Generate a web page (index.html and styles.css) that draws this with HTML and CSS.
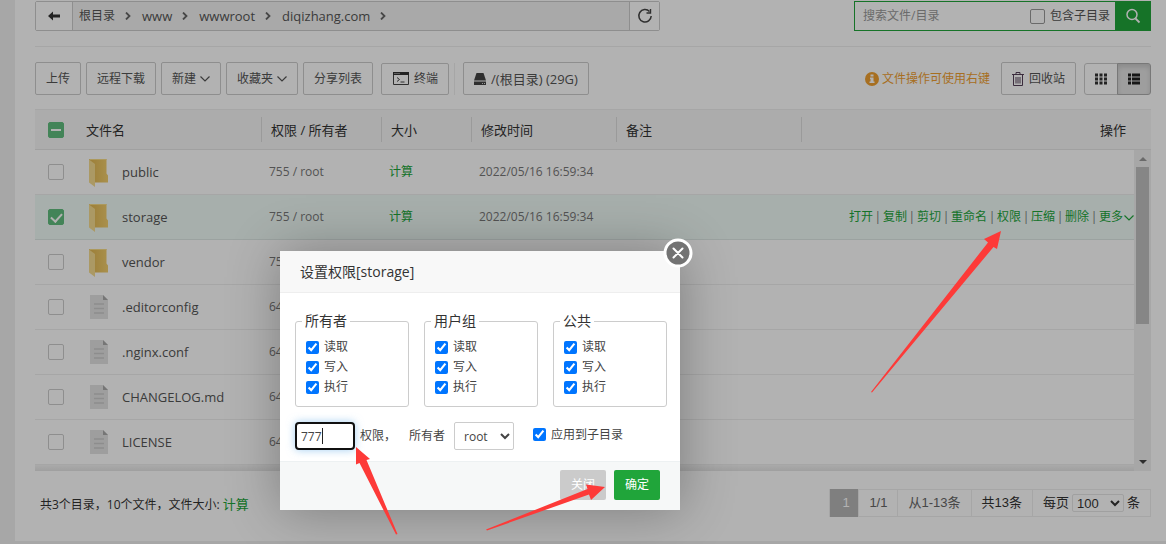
FILE: index.html
```html
<!DOCTYPE html>
<html lang="zh-CN">
<head>
<meta charset="utf-8">
<title>文件管理</title>
<link rel="stylesheet" href="styles.css">
</head>
<body>
<svg class="defs" aria-hidden="true">
  <symbol id="chev-down" viewBox="0 0 10 6"><path d="M.5.5 5 5 9.500.5" fill="none" stroke="currentColor" stroke-width="1.200"/></symbol>
  <symbol id="chev-right" viewBox="0 0 6 8"><path d="M1 .5 4.500 4 1 7.500" fill="none" stroke="currentColor" stroke-width="1.800"/></symbol>
  <linearGradient id="folder-back" x1="0" y1="0" x2="1" y2="0"><stop offset="0" stop-color="#dfb54f"/><stop offset=".5" stop-color="#e9c25f"/><stop offset="1" stop-color="#f3cf6f"/></linearGradient>
  <symbol id="folder" viewBox="0 0 20 29">
    <path d="M1 1h17.500v14.500l1.500 2V24.500H6z" fill="url(#folder-back)"/>
    <path d="M1 1h17.500v1H2z" fill="#f7dc86"/>
    <path d="M1 1.500 7 6v23L1 24.500z" fill="#f5dc90"/>
  </symbol>
  <symbol id="doc" viewBox="0 0 18 24">
    <path d="M0 0h13l5 5v19H0z" fill="#e3e3e3"/><path d="M13 0l5 5h-5z" fill="#a9a9a9"/>
    <path d="M4 9h10M4 13.500h10M4 18h10" stroke="#cacaca" stroke-width="1.600"/>
  </symbol>
</svg>

<main class="panel">
  <div class="top-row">
    <div class="path-bar">
      <button class="back" aria-label="返回"><svg width="14" height="10" viewBox="0 0 14 10"><path d="M1 5 6 .5v3h7v3H6v3z" fill="#333"/></svg></button>
      <nav class="crumbs">
        <a href="#">根目录</a><svg class="sep"><use href="#chev-right"/></svg>
        <a href="#">www</a><svg class="sep"><use href="#chev-right"/></svg>
        <a href="#">wwwroot</a><svg class="sep"><use href="#chev-right"/></svg>
        <a href="#">diqizhang.com</a><svg class="sep"><use href="#chev-right"/></svg>
      </nav>
      <button class="refresh" aria-label="刷新"><svg width="16" height="16" viewBox="0 0 16 16"><path d="M12.500 3.500A6.200 6.200 0 1 0 14.200 8" fill="none" stroke="#444" stroke-width="1.500"/><path d="M13.500 1v4H9.500" fill="none" stroke="#444" stroke-width="1.400"/></svg></button>
    </div>
    <div class="search">
      <input class="search-text" type="text" placeholder="搜索文件/目录" aria-label="搜索文件/目录">
      <label class="sub"><input class="box small" type="checkbox">包含子目录</label>
      <button class="search-btn" aria-label="搜索"><svg width="16" height="16" viewBox="0 0 16 16"><circle cx="7" cy="6.500" r="5" fill="none" stroke="#fff" stroke-width="1.500"/><path d="M10.500 10.500 14.500 14.500" stroke="#fff" stroke-width="1.800"/></svg></button>
    </div>
  </div>

  <div class="toolbar">
    <button class="btn">上传</button>
    <button class="btn">远程下载</button>
    <button class="btn">新建<svg class="down"><use href="#chev-down"/></svg></button>
    <button class="btn">收藏夹<svg class="down"><use href="#chev-down"/></svg></button>
    <button class="btn">分享列表</button>
    <div class="group"><button class="btn term"><svg width="16" height="13" viewBox="0 0 16 13"><path d="M.5.5h15v12H.5z" fill="none" stroke="#444"/><path d="M0 0h16v3H0z" fill="#333"/><path d="M1.500 1.500h1M3.500 1.500h1M5.500 1.500h1" stroke="#ddd"/><path d="M4 5.500 6.500 7.500 4 9.500M7.500 10h4" fill="none" stroke="#444"/></svg>终端</button></div>
    <button class="btn disk"><svg width="12" height="12" viewBox="0 0 12 12"><path d="M2.500 0h7L12 7.500H0z" fill="#444"/><path d="M0 8.500h12V12H0z" fill="#444"/><path d="M8 10.500h1M10 10.500h1" stroke="#ddd"/></svg>/(根目录) (29G)</button>
    <span class="tip"><svg width="14" height="14" viewBox="0 0 14 14"><circle cx="7" cy="7" r="7" fill="#f0a030"/><path d="M5.500 2.500h3v2h-3zM5 5.500h3.500V9.500H9.500v1.500h-5V9.500H5.500V7H5z" fill="#fff"/></svg>文件操作可使用右键</span>
    <button class="btn bin"><svg width="12" height="14" viewBox="0 0 12 14"><path d="M0 2.500h12M4 2V.5h4V2M1.500 3v10.500h9V3M4 5v6.500M6 5v6.500M8 5v6.500" fill="none" stroke="#554058"/></svg>回收站</button>
    <div class="views">
      <button aria-label="图标视图"><svg width="12" height="12" viewBox="0 0 12 12"><path d="M0 2h3M4.500 2h3M9 2h3M0 6h3M4.500 6h3M9 6h3M0 10h3M4.500 10h3M9 10h3" stroke="#333" stroke-width="3"/></svg></button>
      <button class="on" aria-label="列表视图"><svg width="12" height="12" viewBox="0 0 12 12"><path d="M0 2h3M4 2h8M0 6h3M4 6h8M0 10h3M4 10h8" stroke="#222" stroke-width="3"/></svg></button>
    </div>
  </div>

  <table class="grid head">
    <colgroup><col class="c-check"><col class="c-name"><col class="c-perm"><col class="c-size"><col class="c-date"><col class="c-note"><col></colgroup>
    <thead><tr>
      <th><input class="box mixed" type="checkbox" aria-label="全选"></th>
      <th>文件名</th><th class="line">权限 / 所有者</th><th class="line">大小</th><th class="line">修改时间</th><th class="line">备注</th><th class="line ops-head">操作</th>
    </tr></thead>
  </table>
  <div class="scroll">
    <div class="rows">
      <table class="grid list">
        <colgroup><col class="c-check"><col class="c-name"><col class="c-perm"><col class="c-size"><col class="c-date"><col></colgroup>
        <tbody>
          <tr><td><input class="box" type="checkbox" aria-label="public"></td><td><div class="file"><svg class="folder"><use href="#folder"/></svg>public</div></td><td>755 / root</td><td><a href="#">计算</a></td><td>2022/05/16 16:59:34</td><td></td></tr>
          <tr class="picked"><td><input class="box" type="checkbox" checked aria-label="storage"></td><td><div class="file"><svg class="folder"><use href="#folder"/></svg>storage</div></td><td>755 / root</td><td><a href="#">计算</a></td><td>2022/05/16 16:59:34</td>
            <td><div class="ops"><a href="#">打开</a><i>|</i><a href="#">复制</a><i>|</i><a href="#">剪切</a><i>|</i><a href="#">重命名</a><i>|</i><a href="#">权限</a><i>|</i><a href="#">压缩</a><i>|</i><a href="#">删除</a><i>|</i><a href="#">更多<svg class="down"><use href="#chev-down"/></svg></a></div></td></tr>
          <tr><td><input class="box" type="checkbox" aria-label="vendor"></td><td><div class="file"><svg class="folder"><use href="#folder"/></svg>vendor</div></td><td>755 / root</td><td></td><td></td><td></td></tr>
          <tr><td><input class="box" type="checkbox" aria-label=".editorconfig"></td><td><div class="file"><svg class="doc"><use href="#doc"/></svg>.editorconfig</div></td><td>644 / root</td><td></td><td></td><td></td></tr>
          <tr><td><input class="box" type="checkbox" aria-label=".nginx.conf"></td><td><div class="file"><svg class="doc"><use href="#doc"/></svg>.nginx.conf</div></td><td>644 / root</td><td></td><td></td><td></td></tr>
          <tr><td><input class="box" type="checkbox" aria-label="CHANGELOG.md"></td><td><div class="file"><svg class="doc"><use href="#doc"/></svg>CHANGELOG.md</div></td><td>644 / root</td><td></td><td></td><td></td></tr>
          <tr><td><input class="box" type="checkbox" aria-label="LICENSE"></td><td><div class="file"><svg class="doc"><use href="#doc"/></svg>LICENSE</div></td><td>644 / root</td><td></td><td></td><td></td></tr>
        </tbody>
      </table>
      <div class="fade"></div>
    </div>
    <div class="bar"><svg width="8" height="4" viewBox="0 0 8 4"><path d="M0 4 4 0l4 4z" fill="#999"/></svg><div class="thumb"></div><svg width="8" height="4" viewBox="0 0 8 4"><path d="M0 0h8L4 4z" fill="#444"/></svg></div>
  </div>

  <footer class="foot">
    <div class="count">共3个目录，10个文件，文件大小: <a href="#">计算</a></div>
    <div class="pager">
      <span class="cur">1</span><span class="muted">1/1</span><span class="muted">从1-13条</span><span>共13条</span>
      <label>每页<select><option>100</option></select>条</label>
    </div>
  </footer>
</main>

<div class="shade"></div>

<section class="dialog" role="dialog" aria-label="设置权限">
  <h2>设置权限[storage]</h2>
  <button class="close" aria-label="关闭窗口"><svg width="30" height="30" viewBox="0 0 30 30"><circle cx="15" cy="15" r="13" fill="#737373" stroke="#fff" stroke-width="3"/><path d="M10.500 10.500l9 9M19.500 10.500l-9 9" stroke="#fff" stroke-width="2" stroke-linecap="round"/></svg></button>
  <div class="content">
    <div class="sets">
      <fieldset><legend>所有者</legend><label><input type="checkbox" checked>读取</label><label><input type="checkbox" checked>写入</label><label><input type="checkbox" checked>执行</label></fieldset>
      <fieldset><legend>用户组</legend><label><input type="checkbox" checked>读取</label><label><input type="checkbox" checked>写入</label><label><input type="checkbox" checked>执行</label></fieldset>
      <fieldset><legend>公共</legend><label><input type="checkbox" checked>读取</label><label><input type="checkbox" checked>写入</label><label><input type="checkbox" checked>执行</label></fieldset>
    </div>
    <div class="form-row">
      <div class="mode"><input id="mode" type="text" value="777"><span class="caret"></span></div>
      <label class="mode-label" for="mode">权限，</label>
      <label class="owner">所有者<select><option>root</option></select></label>
      <label class="apply"><input type="checkbox" checked>应用到子目录</label>
    </div>
  </div>
  <div class="actions"><button class="cancel">关闭</button><button class="ok">确定</button></div>
</section>

<svg class="arrows" width="1166" height="544" viewBox="0 0 1166 544" aria-hidden="true">
  <g fill="#fd3a38">
    <path d="M1001 231 984 239 988 242.500 871 392 872 392.500 993.500 247 997 249z"/>
    <path d="M356 447 356 464.500 359.500 463 396 534.500 397.500 534 366.500 460 370 459z"/>
    <path d="M605 487 586 484.500 587.500 489 486 529.500 487 530.500 589 494.500 591 500z"/>
  </g>
</svg>
</body>
</html>
```
FILE: styles.css
```css
* { box-sizing: border-box; }
body {
  margin: 0;
  padding-left: 15px;
  background: #f0f0f0;
  color: #555;
  font: 12px/20px "Open Sans", "Noto Sans CJK SC", sans-serif;
  position: relative;
  min-height: 100vh;
  overflow: hidden;
}
button, input, select { font: inherit; color: inherit; margin: 0; }
button { padding: 0; border: 0; background: none; }
a { color: #20a53a; text-decoration: none; }
svg { flex: none; }
.defs { position: absolute; width: 0; height: 0; }
.panel { background: #fff; padding: 1px 15px 24px 20px; }

.top-row {
  display: flex;
  justify-content: space-between;
  padding-bottom: 15px;
  border-bottom: 1px solid #eee;
}
.path-bar {
  display: flex;
  width: 625px;
  height: 30px;
  border: 1px solid #ccc;
  border-radius: 2px;
  background: #f3f3f3;
}
.path-bar button { display: flex; align-items: center; justify-content: center; background: #fff; }
.path-bar .back { width: 37px; border-right: 1px solid #ccc; }
.path-bar .refresh { width: 30px; border-left: 1px solid #ccc; }
.crumbs { flex: 1; display: flex; align-items: center; padding-left: 6px; font-size: 13px; }
.crumbs a { color: #555; }
.crumbs a:first-child { font-size: 12px; }
.sep { width: 6px; height: 8px; margin: 0 11px 0 10px; color: #666; }

.search { display: flex; width: 297px; height: 30px; border: 1px solid #20a53a; }
.search-text { flex: 1; min-width: 0; border: 0; background: none; padding: 0 8px; }
.search-text::placeholder { color: #999; }
.sub { display: flex; align-items: center; gap: 5px; padding-right: 5px; }
.search-btn { width: 35px; background: #20a53a; display: flex; align-items: center; justify-content: center; }

.toolbar { display: flex; align-items: center; gap: 5px; padding: 15px 0 14px; }
.btn {
  display: flex;
  align-items: center;
  height: 33px;
  padding: 0 10px;
  border: 1px solid #ccc;
  border-radius: 2px;
  background: #fff;
  white-space: nowrap;
}
.down { width: 10px; height: 6px; margin-left: 4px; }
.group { margin-left: 3px; padding-right: 5px; border-right: 1px solid #eee; }
.term, .disk, .bin { gap: 5px; }
.group .btn { height: 32px; padding: 0 10px 0 11px; }
.disk { margin-left: 3px; font-size: 13px; }
.tip { display: flex; align-items: center; gap: 3px; margin: 0 6px 0 auto; color: #f0a030; }
.bin { padding: 0 10px; }
.views { display: flex; margin-left: 3px; height: 32px; }
.views button { width: 34px; border: 1px solid #ccc; border-radius: 3px 0 0 3px; display: flex; align-items: center; justify-content: center; }
.views .on { margin-left: -1px; border-color: #adadad; border-radius: 0 3px 3px 0; background: #e3e3e3; box-shadow: inset 0 3px 5px rgba(0, 0, 0, .13); }

.grid { width: 100%; table-layout: fixed; border-collapse: separate; border-spacing: 0; }
.c-check { width: 41px; }
.c-name { width: 185px; }
.c-perm { width: 120px; }
.c-size { width: 90px; }
.c-date { width: 145px; }
.c-note { width: 185px; }
.head { background: #f6f6f6; border-top: 1px solid #eee; border-bottom: 1px solid #e6e6e6; }
.head th { height: 39px; padding: 0 0 0 10px; text-align: left; font-size: 13px; font-weight: normal; color: #333; }
.head th:first-child { padding-left: 13px; }
.head .line { background: linear-gradient(#ddd, #ddd) left center / 1px 25px no-repeat; }
.head .ops-head { text-align: right; padding-right: 25px; }
.box {
  appearance: none;
  display: block;
  position: relative;
  width: 16px;
  height: 16px;
  border: 1px solid #ccc;
  border-radius: 2px;
}
.small { width: 15px; height: 15px; border-color: #999; }
.box:checked, .mixed { background: #61be7e; border-color: #61be7e; }
.mixed::after { content: ""; position: absolute; left: 2px; top: 6px; width: 10px; height: 2px; background: #fff; }
.box:checked::after { content: ""; position: absolute; left: 4px; top: 1px; width: 5px; height: 9px; border: solid #fff; border-width: 0 2px 2px 0; transform: rotate(42deg); }

.scroll { display: flex; }
.rows { flex: 1; min-width: 0; }
.list td { height: 45px; padding: 0 0 0 8px; border-bottom: 1px solid #eee; color: #777; white-space: nowrap; }
.list td:first-child { padding-left: 13px; }
.list .picked td { background: #f0fbf7; border-bottom-color: #dfe9e6; }
.file { display: flex; align-items: center; color: #555; font-size: 13px; }
.folder { width: 20px; height: 29px; margin: 0 14px 0 4px; }
.doc { width: 18px; height: 24px; margin: 0 14px 0 6px; }
.ops { display: flex; justify-content: flex-end; }
.ops i { width: 10px; text-align: center; font-style: normal; }
.ops .down { margin-left: 1px; }
.fade { height: 6px; background: linear-gradient(#f4f4f4, #e4e4e4); }
.bar { width: 17px; display: flex; flex-direction: column; align-items: center; padding: 7px 0; background: #f0f0f0; }
.thumb { width: 13px; height: 157px; margin: 6px 0 auto; background: #c1c1c1; }

.foot { display: flex; justify-content: space-between; align-items: flex-start; padding-top: 18px; color: #333; }
.count { padding: 5px 0 0 5px; }
.count a { font-size: 13px; }
.pager { display: flex; height: 28px; border: 1px solid #eee; font: 13px/26px "Liberation Sans", "Noto Sans CJK SC", sans-serif; }
.pager > * { padding: 0 10px; border-left: 1px solid #eee; }
.pager .cur { width: 28px; margin: -1px 0; line-height: 28px; padding-left: 12px; border: 0; background: #b6b6b6; color: #fff; }
.pager .muted { color: #666; }
.pager label { display: flex; align-items: center; gap: 3px; }
.pager select { width: 52px; height: 18px; border: 1px solid #e6e6e6; border-radius: 2px; background: #fff; }

.shade { position: absolute; inset: 0; background: rgba(0, 0, 0, .3); }

.dialog {
  position: absolute;
  left: 280px;
  top: 251px;
  width: 400px;
  background: #fff;
  color: #444;
  box-shadow: 1px 1px 50px rgba(0, 0, 0, .3);
}
.dialog h2 { margin: 0; padding: 0 20px; height: 42px; line-height: 41px; font-size: 14px; font-weight: normal; background: #f8f8f8; border-bottom: 1px solid #eee; color: #333; }
.close { position: absolute; right: -13px; top: -13px; width: 30px; height: 30px; }
.close svg { display: block; }
.content { padding: 18px 13px 11px 15px; }
.sets { display: flex; gap: 15px; }
fieldset { flex: 1; min-width: 0; margin: 0; padding: 6px 10px 9px; border: 1px solid #ccc; border-radius: 3px; }
legend { padding: 0 3px; margin-left: -4px; font-size: 14px; line-height: 20px; color: #333; }
.dialog label { display: flex; align-items: center; gap: 5px; }
.dialog input[type="checkbox"] { width: 13px; height: 13px; accent-color: #0075ff; }
.form-row { display: flex; align-items: center; margin-top: 15px; }
.mode { position: relative; }
.mode input { display: block; width: 60px; height: 28px; padding: 0 4px; border: 2px solid #101010; border-radius: 4px; outline: 0; box-shadow: 0 0 8px rgba(102, 175, 233, .6); }
.caret { position: absolute; left: 27px; top: 6px; width: 1px; height: 16px; background: #222; }
.mode-label { margin-left: 5px; }
.owner { margin-left: 13px; }
.owner select { width: 60px; height: 28px; margin-left: 4px; padding-left: 5px; border: 1px solid #ccc; border-radius: 2px; background: #fff; }
.apply { margin: 0 0 3px 19px; }
.actions { display: flex; justify-content: flex-end; gap: 8px; padding: 8px 20px 10px; background: #f6f8f8; border-top: 1px solid #edf1f2; }
.actions button { width: 46px; height: 30px; border-radius: 2px; color: #fff; }
.cancel { background: #cbcbcb; }
.ok { background: #20a53a; }

.arrows { position: absolute; left: 0; top: 0; pointer-events: none; }
```
